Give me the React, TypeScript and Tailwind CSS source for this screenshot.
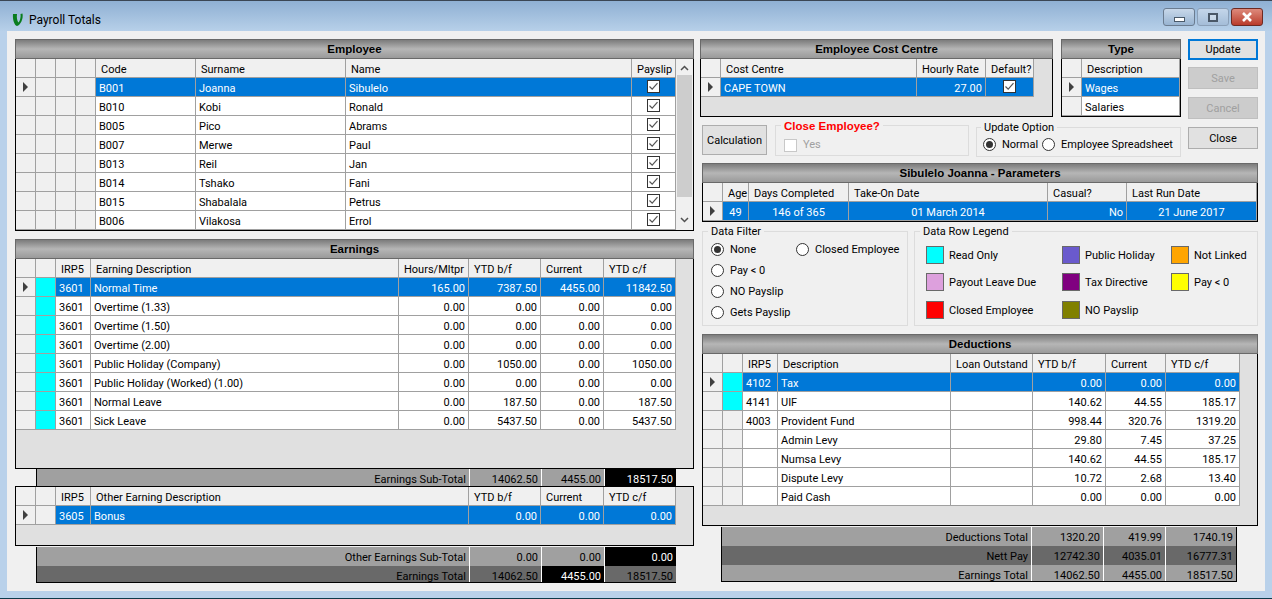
import React from "react";

type Align = "l" | "r" | "c";
const LINE = "border-r border-b border-[#a0a0a0]";

function Arrow() {
  return (
    <svg width="7" height="10" viewBox="0 0 7 10" className="block">
      <polygon points="1,0 6,5 1,10" fill="#404040" />
    </svg>
  );
}

function Check({ disabled }: { disabled?: boolean }) {
  return (
    <span className={`inline-flex w-[13px] h-[13px] bg-white border shrink-0 ${disabled ? "border-[#c8c8c8]" : "border-[#333333]"}`}>
      {!disabled && (
        <svg width="11" height="11" viewBox="0 0 11 11">
          <path d="M1.5 5.5 L4.2 8.2 L9.5 2.2" fill="none" stroke="#555555" strokeWidth="1.2" />
        </svg>
      )}
    </span>
  );
}

function Radio({ on, label }: { on?: boolean; label: string }) {
  return (
    <span className="flex items-center gap-[6px] h-[14px] whitespace-nowrap">
      <span className="w-[13px] h-[13px] rounded-full border border-[#333333] bg-white flex items-center justify-center shrink-0">
        {on && <span className="w-[7px] h-[7px] rounded-full bg-[#333333]" />}
      </span>
      <span className="pt-[2px]">{label}</span>
    </span>
  );
}

function Title({ text }: { text: string }) {
  return (
    <div className="h-[20px] pt-[1px] bg-linear-to-b from-[#7c7c7c] via-[#b6b6b6] to-[#9a9a9a] border border-[#696969] flex items-center justify-center font-bold text-[11.5px] text-black [font-family:'Liberation_Sans',sans-serif]">
      {text}
    </div>
  );
}

type GridProps = {
  cols: string;
  head: string[];
  align: Align[];
  rows: (string | React.ReactNode)[][];
  tint?: boolean[];
  stub: number;
  selected?: number;
};

function Grid({ cols, head, align, rows, tint, stub, selected = 0 }: GridProps) {
  return (
    <div className="leading-[22px]">
      <div className={`grid ${cols} h-[19px]`}>
        {head.map((h, i) => (
          <div key={i} className={`${LINE} bg-[#f0f0f0] pl-[5px] overflow-hidden whitespace-nowrap`}>
            {h}
          </div>
        ))}
      </div>
      {rows.map((r, ri) => (
        <div key={ri} className={`grid ${cols} h-[19px]`}>
          {head.map((_, ci) => {
            if (ci < stub) {
              const isTint = ci === 1 && tint && tint[ri];
              return (
                <div key={ci} className={`${LINE} ${isTint ? "bg-[#00ffff]" : "bg-[#f0f0f0]"} flex items-center justify-center`}>
                  {ci === 0 && ri === selected && <Arrow />}
                </div>
              );
            }
            const a = align[ci];
            const sel = ri === selected;
            return (
              <div
                key={ci}
                className={`${LINE} ${sel ? "bg-[#0078d7] text-white" : "bg-white"} overflow-hidden whitespace-nowrap ${
                  a === "r" ? "text-right pr-[3px]" : a === "c" ? "text-center" : "pl-[3px]"
                }`}
              >
                {r[ci - stub]}
              </div>
            );
          })}
        </div>
      ))}
    </div>
  );
}

function TotalRow({
  cols,
  cells,
  dark,
  black,
  last,
  short,
}: {
  cols: string;
  cells: string[];
  dark?: boolean;
  black?: number;
  last?: boolean;
  short?: boolean;
}) {
  return (
    <div className={`grid ${cols} ${short ? "h-[16px]" : last ? "h-[17px]" : "h-[19px]"} leading-[21px] overflow-hidden`}>
      {cells.map((c, i) => (
        <div
          key={i}
          className={`text-right pr-[3px] whitespace-nowrap ${i < cells.length - 1 ? "border-r border-white" : ""} ${
            last ? "" : "border-b border-white"
          } ${black === i ? "bg-black text-white" : dark ? "bg-[#696969] text-black" : "bg-[#a0a0a0] text-black"}`}
        >
          {c}
        </div>
      ))}
    </div>
  );
}

const employees = [
  ["B001", "Joanna", "Sibulelo"],
  ["B010", "Kobi", "Ronald"],
  ["B005", "Pico", "Abrams"],
  ["B007", "Merwe", "Paul"],
  ["B013", "Reil", "Jan"],
  ["B014", "Tshako", "Fani"],
  ["B015", "Shabalala", "Petrus"],
  ["B006", "Vilakosa", "Errol"],
];

const earnings = [
  ["3601", "Normal Time", "165.00", "7387.50", "4455.00", "11842.50"],
  ["3601", "Overtime (1.33)", "0.00", "0.00", "0.00", "0.00"],
  ["3601", "Overtime (1.50)", "0.00", "0.00", "0.00", "0.00"],
  ["3601", "Overtime (2.00)", "0.00", "0.00", "0.00", "0.00"],
  ["3601", "Public Holiday (Company)", "0.00", "1050.00", "0.00", "1050.00"],
  ["3601", "Public Holiday (Worked) (1.00)", "0.00", "0.00", "0.00", "0.00"],
  ["3601", "Normal Leave", "0.00", "187.50", "0.00", "187.50"],
  ["3601", "Sick Leave", "0.00", "5437.50", "0.00", "5437.50"],
];

const deductions = [
  ["4102", "Tax", "", "0.00", "0.00", "0.00"],
  ["4141", "UIF", "", "140.62", "44.55", "185.17"],
  ["4003", "Provident Fund", "", "998.44", "320.76", "1319.20"],
  ["", "Admin Levy", "", "29.80", "7.45", "37.25"],
  ["", "Numsa Levy", "", "140.62", "44.55", "185.17"],
  ["", "Dispute Levy", "", "10.72", "2.68", "13.40"],
  ["", "Paid Cash", "", "0.00", "0.00", "0.00"],
];

const legend: [string, string][] = [
  ["bg-[#00ffff]", "Read Only"],
  ["bg-[#6a5acd]", "Public Holiday"],
  ["bg-[#ffa500]", "Not Linked"],
  ["bg-[#dda0dd]", "Payout Leave Due"],
  ["bg-[#800080]", "Tax Directive"],
  ["bg-[#ffff00]", "Pay < 0"],
  ["bg-[#ff0000]", "Closed Employee"],
  ["bg-[#808000]", "NO Payslip"],
];

function Btn({ label, disabled, primary, cls }: { label: string; disabled?: boolean; primary?: boolean; cls: string }) {
  return (
    <div
      className={`${cls} pt-[2px] flex items-center justify-center shrink-0 ${
        primary
          ? "border-2 border-[#0078d7] bg-[#e1e1e1]"
          : disabled
            ? "border border-[#bfbfbf] bg-[#cccccc] text-[#a0a0a0]"
            : "border border-[#adadad] bg-[#e1e1e1]"
      }`}
    >
      {label}
    </div>
  );
}

function WinBtn({ cls, children }: { cls: string; children: React.ReactNode }) {
  return <div className={`${cls} h-[18px] rounded-[3px] border flex items-center justify-center`}>{children}</div>;
}

export default function App() {
  return (
    <div className="w-[1272px] h-[599px] flex flex-col overflow-hidden text-black text-[11px] bg-[#b9d1ea] border-b border-[#0d3a4a] [font-family:Roboto,'Liberation_Sans',sans-serif]">
      <div className="h-[31px] shrink-0 flex items-center pt-[7px] pl-[12px] pr-[9px] bg-linear-to-b from-[#8fb0d3] to-[#b7d0e9] border-t border-[#3a4654]">
        <svg width="12" height="14" viewBox="0 0 12 14" className="shrink-0">
          <path d="M1 1 C0.5 6 2 12 5 13 C8.5 12 11.5 6 10.5 0.5 L8.5 1 C9 4 8 8 6.5 9.5 C5 8 4.5 4 5 1 Z" fill="#0a7d1e" />
        </svg>
        <span className="ml-[5px] text-[12px]">Payroll Totals</span>
        <div className="ml-auto flex gap-[2px] -mt-[5px]">
          <WinBtn cls="w-[32px] border-[#6b7c90] bg-linear-to-b from-[#c8d8ea] to-[#98b4d2]">
            <span className="w-[11px] h-[5px] mt-[5px] bg-white border border-[#4a5a6a]" />
          </WinBtn>
          <WinBtn cls="w-[32px] border-[#8ba0b8] bg-linear-to-b from-[#c4d6ea] to-[#a4bdd8]">
            <span className="w-[10px] h-[9px] bg-white/30 border-2 border-[#4a5868]" />
          </WinBtn>
          <WinBtn cls="w-[32px] border-[#6e2a22] bg-linear-to-b from-[#dd8a7c] to-[#b93a2a]">
            <svg width="12" height="10" viewBox="0 0 12 10">
              <path d="M2 1 L10 9 M10 1 L2 9" stroke="#ffffff" strokeWidth="2.6" />
            </svg>
          </WinBtn>
        </div>
      </div>

      <div className="ml-[7px] mr-[7px] h-[560px] bg-[#f0f0f0] pl-[8px] pt-[8px] flex shrink-0">
        {/* left column */}
        <div className="w-[679px] shrink-0">
          <Title text="Employee" />
          <div className="border-x border-b border-black h-[172px] flex bg-[#e0e0e0]">
            <Grid
              cols="grid-cols-[20px_20px_20px_20px_100px_150px_286px_44px] w-[660px]"
              head={["", "", "", "", "Code", "Surname", "Name", "Payslip"]}
              align={["l", "l", "l", "l", "l", "l", "l", "c"]}
              stub={4}
              rows={employees.map((e) => [...e, <span key="c" className="flex justify-center pt-[2px]"><Check /></span>])}
            />
            <div className="w-[17px] bg-[#f0f0f0] flex flex-col items-center">
              <svg width="9" height="6" viewBox="0 0 9 6" className="mt-[6px]">
                <path d="M1 5 L4.5 1.5 L8 5" fill="none" stroke="#505050" strokeWidth="1.5" />
              </svg>
              <div className="w-[15px] h-[122px] bg-[#cdcdcd] mt-[4px]" />
              <svg width="9" height="6" viewBox="0 0 9 6" className="mt-[20px]">
                <path d="M1 1 L4.5 4.5 L8 1" fill="none" stroke="#505050" strokeWidth="1.5" />
              </svg>
            </div>
          </div>

          <div className="mt-[8px]">
            <Title text="Earnings" />
          </div>
          <div className="border-x border-b border-black h-[210px] bg-[#e0e0e0]">
            <Grid
              cols="grid-cols-[20px_20px_35px_308px_70px_72px_63px_72px] w-[660px]"
              head={["", "", "IRP5", "Earning Description", "Hours/Mltpr", "YTD b/f", "Current", "YTD c/f"]}
              align={["l", "l", "l", "l", "r", "r", "r", "r"]}
              stub={2}
              tint={earnings.map(() => true)}
              rows={earnings}
            />
          </div>
          <div className="ml-[21px] w-[640px] border-l border-black">
            <TotalRow
              cols="grid-cols-[433px_72px_63px_71px]"
              cells={["Earnings Sub-Total", "14062.50", "4455.00", "18517.50"]}
              black={3}
              last
            />
          </div>
          <div className="border border-black h-[60px] bg-[#e0e0e0]">
            <Grid
              cols="grid-cols-[20px_20px_35px_378px_72px_63px_72px] w-[660px]"
              head={["", "", "IRP5", "Other Earning Description", "YTD b/f", "Current", "YTD c/f"]}
              align={["l", "l", "l", "l", "r", "r", "r"]}
              stub={2}
              rows={[["3605", "Bonus", "0.00", "0.00", "0.00"]]}
            />
          </div>
          <div className="ml-[21px] w-[640px] mt-[1px] border-l border-b border-black">
            <TotalRow
              cols="grid-cols-[433px_72px_63px_71px]"
              cells={["Other Earnings Sub-Total", "0.00", "0.00", "0.00"]}
              black={3}
            />
            <TotalRow
              cols="grid-cols-[433px_72px_63px_71px]"
              cells={["Earnings Total", "14062.50", "4455.00", "18517.50"]}
              dark
              black={2}
              last
              short
            />
          </div>
        </div>

        {/* right column */}
        <div className="w-[558px] ml-[6px] shrink-0">
          <div className="flex h-[124px] gap-[7px]">
            <div className="w-[481px]">
              <div className="flex gap-[8px]">
                <div className="w-[353px]">
                  <Title text="Employee Cost Centre" />
                  <div className="border-x border-b border-black h-[58px] bg-[#e0e0e0]">
                    <Grid
                      cols="grid-cols-[20px_196px_69px_48px] w-[333px]"
                      head={["", "Cost Centre", "Hourly Rate", "Default?"]}
                      align={["l", "l", "r", "c"]}
                      stub={1}
                      rows={[["CAPE TOWN", "27.00", <span key="c" className="flex justify-center pt-[2px]"><Check /></span>]]}
                    />
                  </div>
                </div>
                <div className="w-[120px]">
                  <Title text="Type" />
                  <div className="border-x border-b border-black h-[58px] bg-[#e0e0e0]">
                    <Grid
                      cols="grid-cols-[20px_98px] w-[118px]"
                      head={["", "Description"]}
                      align={["l", "l"]}
                      stub={1}
                      rows={[["Wages"], ["Salaries"]]}
                    />
                  </div>
                </div>
              </div>
              <div className="flex ml-[2px] mt-[8px] items-start">
                <Btn label="Calculation" cls="w-[65px] h-[30px]" />
                <fieldset className="ml-[8px] w-[194px] h-[38px] -mt-[7px] border border-[#dcdcdc] pl-[8px] shrink-0">
                  <legend className="-ml-[3px] px-[3px] text-[#ff0000] font-bold text-[11.5px] leading-[14px] [font-family:'Liberation_Sans',sans-serif]">
                    <span className="relative top-[1px]">Close Employee?</span>
                  </legend>
                  <span className="flex items-center gap-[6px] text-[#a0a0a0] mt-[5px]">
                    <Check disabled />
                    Yes
                  </span>
                </fieldset>
                <fieldset className="ml-[7px] w-[205px] h-[37px] -mt-[5px] border border-[#dcdcdc] pl-[6px] shrink-0">
                  <legend className="-ml-[2px] px-[3px] leading-[14px]">
                    <span className="relative top-[1px]">Update Option</span>
                  </legend>
                  <div className="grid grid-cols-[59px_1fr] mt-[3px]">
                    <Radio on label="Normal" />
                    <Radio label="Employee Spreadsheet" />
                  </div>
                </fieldset>
              </div>
            </div>
            <div className="w-[70px] flex flex-col">
              <Btn label="Update" primary cls="h-[21px]" />
              <Btn label="Save" disabled cls="h-[22px] mt-[7px]" />
              <Btn label="Cancel" disabled cls="h-[22px] mt-[8px]" />
              <Btn label="Close" cls="h-[22px] mt-[8px]" />
            </div>
          </div>

          <div className="ml-[2px] w-[556px]">
            <Title text="Sibulelo Joanna - Parameters" />
            <div className="border-x border-b border-black h-[39px]">
              <Grid
                cols="grid-cols-[20px_26px_100px_199px_79px_130px]"
                head={["", "Age", "Days Completed", "Take-On Date", "Casual?", "Last Run Date"]}
                align={["l", "c", "c", "c", "r", "c"]}
                stub={1}
                rows={[["49", "146 of 365", "01 March 2014", "No", "21 June 2017"]]}
              />
            </div>

            <div className="flex mt-[2px] gap-[6px]">
              <fieldset className="w-[206px] h-[102px] border border-[#dcdcdc] pl-[8px] shrink-0">
                <legend className="-ml-[3px] px-[3px] leading-[14px]">
                  <span className="relative top-[1px]">Data Filter</span>
                </legend>
                <div className="grid grid-cols-[85px_1fr] grid-rows-[21px_21px_21px_21px] mt-[4px]">
                  <Radio on label="None" />
                  <Radio label="Closed Employee" />
                  <Radio label="Pay < 0" />
                  <span />
                  <Radio label="NO Payslip" />
                  <span />
                  <Radio label="Gets Payslip" />
                </div>
              </fieldset>
              <fieldset className="w-[344px] h-[102px] border border-[#dcdcdc] pl-[11px] shrink-0">
                <legend className="-ml-[6px] px-[3px] leading-[14px]">
                  <span className="relative top-[1px]">Data Row Legend</span>
                </legend>
                <div className="grid grid-cols-[136px_109px_1fr] grid-rows-[27px_28px_20px] mt-[8px]">
                  {legend.map(([c, t]) => (
                    <div key={t} className="flex items-start gap-[5px] whitespace-nowrap">
                      <span className={`w-[18px] h-[18px] border border-[#696969] shrink-0 ${c}`} />
                      <span className="leading-[20px]">{t}</span>
                    </div>
                  ))}
                </div>
              </fieldset>
            </div>

            <div className="mt-[8px]">
              <Title text="Deductions" />
            </div>
            <div className="border-x border-b border-black h-[172px] bg-[#e0e0e0]">
              <Grid
                cols="grid-cols-[20px_20px_35px_173px_82px_73px_60px_74px] w-[537px]"
                head={["", "", "IRP5", "Description", "Loan Outstand", "YTD b/f", "Current", "YTD c/f"]}
                align={["l", "l", "l", "l", "r", "r", "r", "r"]}
                stub={2}
                tint={[true, true, false, false, false, false, false]}
                rows={deductions}
              />
            </div>
            <div className="ml-[19px] w-[516px] mt-[1px] border-x border-b border-black">
              <TotalRow
                cols="grid-cols-[310px_72px_62px_70px]"
                cells={["Deductions Total", "1320.20", "419.99", "1740.19"]}
              />
              <TotalRow
                cols="grid-cols-[310px_72px_62px_70px]"
                cells={["Nett Pay", "12742.30", "4035.01", "16777.31"]}
                dark
              />
              <TotalRow
                cols="grid-cols-[310px_72px_62px_70px]"
                cells={["Earnings Total", "14062.50", "4455.00", "18517.50"]}
                last
                short
              />
            </div>
          </div>
        </div>
      </div>
    </div>
  );
}
